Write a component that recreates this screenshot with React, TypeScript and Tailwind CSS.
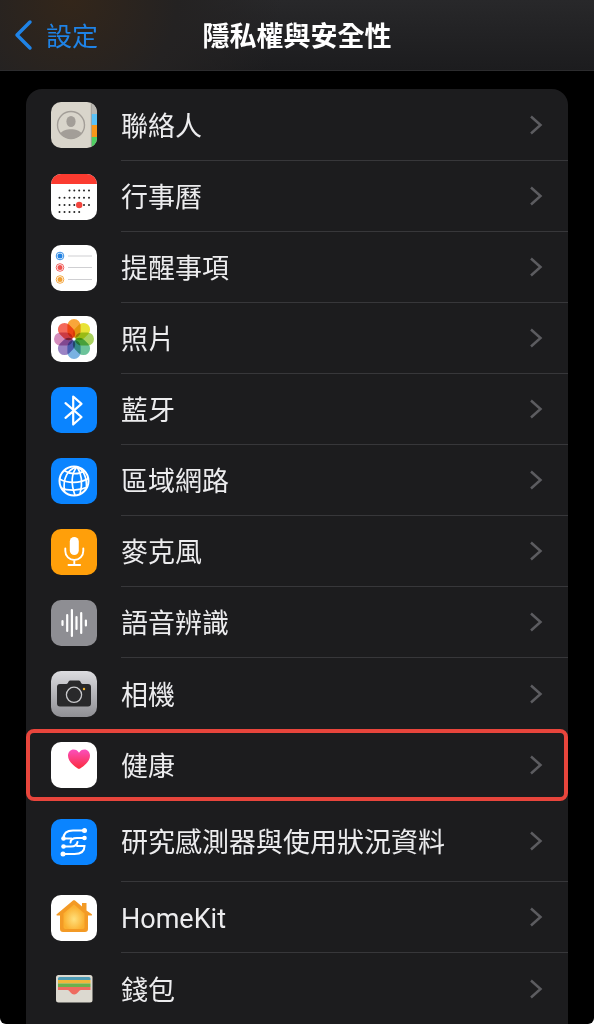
import type { ReactNode } from "react";

type RowType = {
  label: string;
  icon: ReactNode;
  height?: string;
  highlighted?: boolean;
  noLine?: boolean;
};

const Tile = ({ bg, children }: { bg: string; children: ReactNode }) => (
  <svg
    viewBox="0 0 46 46"
    aria-hidden="true"
    className={`size-[46px] shrink-0 rounded-[10px] ${bg}`}
  >
    {children}
  </svg>
);

const ContactsIcon = () => (
  <Tile bg="bg-[#d9d5cb]">
    <circle cx="20" cy="23" r="13.5" fill="none" stroke="#a39e98" strokeWidth="1.4" />
    <ellipse cx="20" cy="19.5" rx="4.6" ry="5.6" fill="#a39e98" />
    <path d="M9.500 31.500c2-3.200 6-4.200 10.500-4.200s8.500 1 10.500 4.200A13.500 13.500 0 0 1 9.500 31.500z" fill="#a39e98" />
    <path d="M40.500 0H46v12h-5.500z" fill="#b9b7b2" />
    <path d="M40.500 12H46v11h-5.500z" fill="#5ac2f7" />
    <path d="M40.500 23H46v12h-5.500z" fill="#f7971b" />
    <path d="M40.500 35H46v11h-5.500z" fill="#4fcf63" />
    <path d="M40.300 0v46" stroke="#8f8c86" strokeWidth=".7" />
  </Tile>
);

const calendarDots = [
  { y: 16.5, xs: [18.5, 23.3, 28.2, 33, 38] },
  { y: 23.7, xs: [8.5, 13.5, 18.5, 23.3, 28.2, 33, 38] },
  { y: 31, xs: [8.5, 13.5, 18.5, 23.3, 28.2, 33, 38] },
  { y: 38, xs: [8.5, 13.5, 18.5, 23.3, 28.2] },
];

const CalendarIcon = () => (
  <Tile bg="bg-white">
    <path d="M0 0h46v10H0z" fill="#fb3b30" />
    {calendarDots.map(({ y, xs }) =>
      xs.map((x) => <circle key={`${x}-${y}`} cx={x} cy={y} r="1" fill="#222" />)
    )}
    <circle cx="28.200" cy="31" r="3.200" fill="#f2453d" />
  </Tile>
);

const reminders = [
  { y: 11, color: "#2081e2" },
  { y: 22.5, color: "#ef5350" },
  { y: 34.5, color: "#f3a033" },
];

const RemindersIcon = () => (
  <Tile bg="bg-white">
    {reminders.map(({ y, color }) => (
      <g key={y}>
        <circle cx="9" cy={y} r="3.800" fill="none" stroke={color} strokeWidth=".9" />
        <circle cx="9" cy={y} r="2.500" fill={color} />
        <path d={`M17 ${y}h24`} stroke="#cfcfd2" strokeWidth="1" />
      </g>
    ))}
  </Tile>
);

const petals = [
  "#f9a63a",
  "#e8e337",
  "#a9d25f",
  "#6cc39a",
  "#7ab2e2",
  "#9a83c4",
  "#d48cbc",
  "#f4695a",
];

const PhotosIcon = () => (
  <Tile bg="bg-white">
    <g className="isolate">
      {petals.map((color, i) => (
        <rect
          key={color}
          x="16.400"
          y="3"
          width="13.200"
          height="19"
          rx="6.600"
          fill={color}
          transform={`rotate(${i * 45} 23 23)`}
          className="mix-blend-multiply"
        />
      ))}
    </g>
    <circle cx="23" cy="23" r="1.600" fill="#fff" />
  </Tile>
);

const BluetoothIcon = () => (
  <Tile bg="bg-[#0a84ff]">
    <path
      d="M14.500 16.200 30.500 30l-8.300 7.500v-28l8.300 7.300-16 14"
      fill="none"
      stroke="#fff"
      strokeWidth="2.200"
      strokeLinejoin="round"
      strokeLinecap="round"
    />
  </Tile>
);

const NetworkIcon = () => (
  <Tile bg="bg-[#0a84ff]">
    <g fill="none" stroke="#fff" strokeWidth="1.700">
      <circle cx="23" cy="23" r="14.500" strokeWidth="2" />
      <path d="M26 8.800C17 11 11.500 20 13.500 33.500M26 8.800c-5 6-6.500 16-2 28.500M26 8.800c4 6 6 16 3 27.300M26 8.800c6 3 10 9 9.500 21.500" />
      <path d="M13 12.500c6 4 15 4.500 20.500 0M8.600 21c8 4.500 20 4.500 28.800-.5M10 30c7 3 18 3 26.500-1" />
    </g>
  </Tile>
);

const MicrophoneIcon = () => (
  <Tile bg="bg-[#ff9f0a]">
    <rect x="18.800" y="8" width="9" height="18" rx="4.500" fill="#fff" />
    <path
      d="M14.300 19.500v2.500a9 9 0 0 0 18 0v-2.500M23.300 31v5M17.500 36h11.600"
      fill="none"
      stroke="#fff"
      strokeWidth="1.900"
      strokeLinecap="round"
    />
  </Tile>
);

const SpeechIcon = () => (
  <Tile bg="bg-[#8e8e93]">
    <path
      d="M11.500 21v4M16.200 15v16M20.900 10v26M25.500 17v12M30.200 13v20M34.900 20.500v5"
      stroke="#fff"
      strokeWidth="2.200"
      strokeLinecap="round"
    />
  </Tile>
);

const CameraIcon = () => (
  <Tile bg="bg-linear-to-b from-[#dcdce0] to-[#8f8f94]">
    <path
      d="M9 13h6.500c1.500 0 2-3.500 3.500-3.500h9c1.500 0 2 3.500 3.500 3.500H37a3 3 0 0 1 3 3v16.500a3 3 0 0 1-3 3H9a3 3 0 0 1-3-3V16a3 3 0 0 1 3-3z"
      fill="#29292b"
    />
    <circle cx="23" cy="23.800" r="7.600" fill="none" stroke="#c9c9cc" strokeWidth="1.300" />
    <circle cx="33" cy="18" r="1.200" fill="#f5b62e" />
  </Tile>
);

const HealthIcon = () => (
  <Tile bg="bg-white">
    <defs>
      <linearGradient id="heart" x1="0" y1="0" x2="0" y2="1">
        <stop offset="0" stopColor="#fb4fbd" />
        <stop offset="1" stopColor="#fb2b3c" />
      </linearGradient>
    </defs>
    <path
      d="M28 27c-1 0-11-6.500-11-13.300 0-3.700 2.600-6.200 5.600-6.200 2.300 0 4.300 1.200 5.400 3.300 1.100-2.100 3.100-3.300 5.400-3.300 3 0 5.600 2.500 5.600 6.200C39 20.500 29 27 28 27z"
      fill="url(#heart)"
    />
  </Tile>
);

const ResearchIcon = () => (
  <Tile bg="bg-[#0a84ff]">
    <g fill="none" stroke="#fff" strokeWidth="2" strokeLinecap="round">
      <path d="M33.500 11.500H22c-6.500 0-9.500 3-9.500 8h8" />
      <path d="M33.500 19H26c-4 0-6.500 1.500-6.500 4.500" />
      <path d="M12.500 27.500H20c4 0 6-1.500 6.500-4.500" />
      <path d="M12 35h11.500c6.500 0 10-3 10-8H26" />
    </g>
    <g fill="#fff">
      <circle cx="33.500" cy="11.500" r="2.500" />
      <circle cx="33.500" cy="19" r="2.300" />
      <circle cx="12.500" cy="19.500" r="2.300" />
      <circle cx="12.500" cy="27.500" r="2.300" />
      <circle cx="12" cy="35" r="2.500" />
    </g>
  </Tile>
);

const HomeIcon = () => (
  <Tile bg="bg-white">
    <defs>
      <radialGradient id="house" cx=".5" cy=".6" r=".5">
        <stop offset="0" stopColor="#ffe07c" />
        <stop offset="1" stopColor="#fbb030" />
      </radialGradient>
    </defs>
    <path
      d="M22 5.500c.6-.5 1.400-.5 2 0l7 6V8h4.500v7.500L40.500 19c1 .8.600 1.500-.5 1.500h-3V34a3 3 0 0 1-3 3H12a3 3 0 0 1-3-3V20.500H6.500c-1.100 0-1.500-.7-.5-1.500z"
      fill="#f39a25"
    />
    <path
      d="M23 9.500 33.500 18.500V32a2 2 0 0 1-2 2h-17a2 2 0 0 1-2-2V18.500z"
      fill="url(#house)"
    />
  </Tile>
);

const WalletIcon = () => (
  <Tile bg="bg-transparent">
    <rect x="5" y="9" width="36.500" height="27.500" rx="2.500" fill="#dcd9d0" />
    <path d="M7 14v-1.500A1.500 1.500 0 0 1 8.500 11H38a1.500 1.500 0 0 1 1.500 1.500V14z" fill="#4e9bb5" />
    <path d="M7 14h32.500v3.500H7z" fill="#f0b73a" />
    <path d="M7 17.500h32.500V21H7z" fill="#6cb04c" />
    <path d="M7 21h32.500v3H30c-2.500 0-3 4.500-6.800 4.500S19 24 16.500 24H7z" fill="#ee6b60" />
  </Tile>
);

const rows: RowType[] = [
  { label: "聯絡人", icon: <ContactsIcon />, height: "h-[72px]" },
  { label: "行事曆", icon: <CalendarIcon /> },
  { label: "提醒事項", icon: <RemindersIcon /> },
  { label: "照片", icon: <PhotosIcon /> },
  { label: "藍牙", icon: <BluetoothIcon /> },
  { label: "區域網路", icon: <NetworkIcon /> },
  { label: "麥克風", icon: <MicrophoneIcon /> },
  { label: "語音辨識", icon: <SpeechIcon /> },
  { label: "相機", icon: <CameraIcon />, noLine: true },
  {
    label: "健康",
    icon: <HealthIcon />,
    height: "h-[72px]",
    highlighted: true,
    noLine: true,
  },
  { label: "研究感測器與使用狀況資料", icon: <ResearchIcon />, height: "h-[81px]" },
  { label: "HomeKit", icon: <HomeIcon /> },
  { label: "錢包", icon: <WalletIcon />, noLine: true },
];

const Row = ({ label, icon, height = "h-[71px]", highlighted, noLine }: RowType) => (
  <li>
    <a
      href="#"
      className={`flex items-center gap-6 pl-[25px] ${height} ${
        highlighted ? "rounded-lg outline-4 -outline-offset-4 outline-[#e8453c]" : ""
      }`}
    >
      {icon}
      <span
        className={`flex h-full flex-1 items-center justify-between pr-[25px] ${
          noLine ? "" : "border-b border-[#37373a]"
        }`}
      >
        <span className="pt-1 text-[27px] leading-9 text-[#ececee]">{label}</span>
        <svg viewBox="0 0 14 20" aria-hidden="true" className="h-5 w-[14px]">
          <path
            d="M2 1.500 11.500 10 2 18.500"
            fill="none"
            stroke="#5c5c60"
            strokeWidth="2.500"
          />
        </svg>
      </span>
    </a>
  </li>
);

const App = () => {
  return (
    <div className="bg-white font-[Roboto,'Noto_Sans_CJK_TC',sans-serif]">
      <div className="min-h-screen rounded-b-md bg-black">
        <header className="grid h-[71px] grid-cols-[1fr_auto_1fr] items-center border-b border-[#2c2c2e] bg-[radial-gradient(circle_at_12%_0%,#33261a_0%,#242222_20%,transparent_40%),linear-gradient(#28282a,#1c1c1e)] px-[14px]">
          <button className="flex items-center gap-3 justify-self-start text-[#1f83e6]">
            <svg viewBox="0 0 20 32" aria-hidden="true" className="h-8 w-5">
              <path
                d="M16 3 3 16l13 13"
                fill="none"
                stroke="currentColor"
                strokeWidth="3.500"
                strokeLinecap="round"
                strokeLinejoin="round"
              />
            </svg>
            <span className="pt-1 text-[26px] leading-9">設定</span>
          </button>
          <h1 className="pt-1 text-[27px] font-bold leading-9 text-white">隱私權與安全性</h1>
        </header>
        <main className="px-[26px] pt-[18px]">
          <ul className="overflow-hidden rounded-t-2xl bg-[#1c1c1e]">
            {rows.map((row) => (
              <Row key={row.label} {...row} />
            ))}
          </ul>
        </main>
      </div>
    </div>
  );
};

export default App;
